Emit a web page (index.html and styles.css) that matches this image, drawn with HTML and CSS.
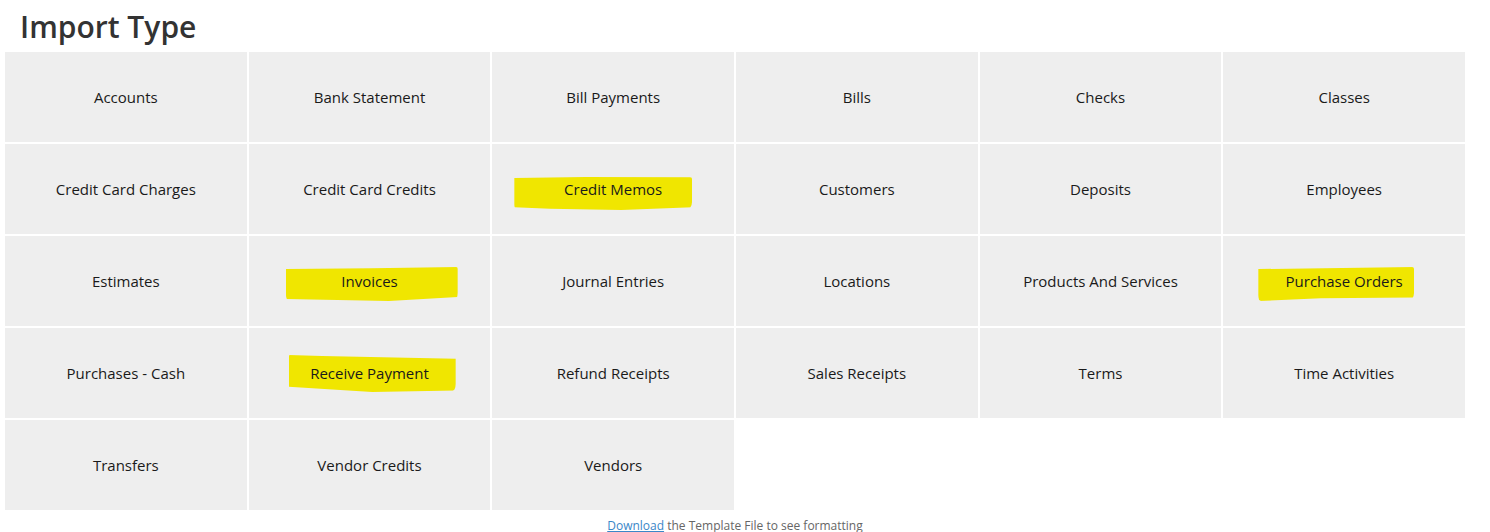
FILE: index.html
```html
<!DOCTYPE html>
<html lang="en">
<head>
<meta charset="utf-8">
<title>Import Type</title>
<link rel="stylesheet" href="styles.css">
</head>
<body>
<div class="page">
  <h1 class="title">Import Type</h1>
  <div class="grid">
    <div class="tile"><span class="label">Accounts</span></div>
    <div class="tile"><span class="label">Bank Statement</span></div>
    <div class="tile"><span class="label">Bill Payments</span></div>
    <div class="tile"><span class="label">Bills</span></div>
    <div class="tile"><span class="label">Checks</span></div>
    <div class="tile"><span class="label">Classes</span></div>

    <div class="tile"><span class="label">Credit Card Charges</span></div>
    <div class="tile"><span class="label">Credit Card Credits</span></div>
    <div class="tile"><span class="hl hl-memos"></span><span class="label">Credit Memos</span></div>
    <div class="tile"><span class="label">Customers</span></div>
    <div class="tile"><span class="label">Deposits</span></div>
    <div class="tile"><span class="label">Employees</span></div>

    <div class="tile"><span class="label">Estimates</span></div>
    <div class="tile"><span class="hl hl-invoices"></span><span class="label">Invoices</span></div>
    <div class="tile"><span class="label">Journal Entries</span></div>
    <div class="tile"><span class="label">Locations</span></div>
    <div class="tile"><span class="label">Products And Services</span></div>
    <div class="tile"><span class="hl hl-po"></span><span class="label">Purchase Orders</span></div>

    <div class="tile"><span class="label">Purchases - Cash</span></div>
    <div class="tile"><span class="hl hl-receive"></span><span class="label">Receive Payment</span></div>
    <div class="tile"><span class="label">Refund Receipts</span></div>
    <div class="tile"><span class="label">Sales Receipts</span></div>
    <div class="tile"><span class="label">Terms</span></div>
    <div class="tile"><span class="label">Time Activities</span></div>

    <div class="tile"><span class="label">Transfers</span></div>
    <div class="tile"><span class="label">Vendor Credits</span></div>
    <div class="tile"><span class="label">Vendors</span></div>
  </div>
  <p class="footer"><a href="#" class="link">Download</a> the Template File to see formatting</p>
</div>
</body>
</html>
```
FILE: styles.css
```css
html, body {
  margin: 0;
  padding: 0;
  background: #ffffff;
}
body {
  font-family: "Open Sans", "Noto Sans", "DejaVu Sans", sans-serif;
  color: #212121;
}
.page {
  width: 1460px;
  padding: 0 0 0 5px;
}
.title {
  margin: 0;
  padding: 7px 0 0 15px;
  height: 52px;
  box-sizing: border-box;
  font-size: 30px;
  font-weight: 600;
  color: #333333;
  line-height: 40px;
}
.grid {
  display: grid;
  grid-template-columns: repeat(6, 1fr);
  grid-auto-rows: 90px;
  gap: 2px 2px;
}
.tile {
  position: relative;
  background: #eeeeee;
  display: flex;
  align-items: center;
  justify-content: center;
}
.label {
  position: relative;
  z-index: 1;
  font-size: 15px;
  color: #1a1a1a;
}
.hl {
  position: absolute;
  z-index: 0;
  background: #f0e600;
  border-radius: 1px 2px 6px 3px / 1px 2px 8px 6px;
}
.hl-memos {
  left: 22px;
  top: 33px;
  width: 178px;
  height: 33px;
  clip-path: polygon(0 3%, 40% 0, 100% 1%, 100% 92%, 60% 100%, 20% 96%, 0 92%);
}
.hl-invoices {
  left: 37px;
  top: 31px;
  width: 172px;
  height: 34px;
  clip-path: polygon(0 6%, 50% 4%, 100% 0, 100% 88%, 60% 100%, 0 94%);
}
.hl-receive {
  left: 40px;
  top: 27px;
  width: 167px;
  height: 37px;
  clip-path: polygon(0 0, 20% 3%, 100% 10%, 100% 96%, 50% 100%, 0 86%);
}
.hl-po {
  left: 35px;
  top: 31px;
  width: 156px;
  height: 34px;
  clip-path: polygon(0 6%, 100% 0, 100% 90%, 40% 92%, 0 100%);
}
.footer {
  margin: 0;
  padding-top: 8px;
  text-align: center;
  font-size: 12px;
  color: #666666;
  line-height: 16px;
}
.link {
  color: #3a87c8;
  text-decoration: underline;
}
```
